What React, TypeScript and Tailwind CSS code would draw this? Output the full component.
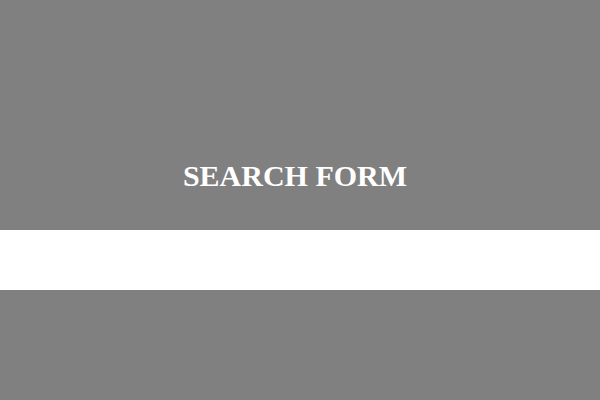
import React from 'react';

const App: React.FC = () => {
  return (
    <div className="w-[600px] h-[400px] bg-[#808080] flex flex-col overflow-hidden">
      <h2
        className="pt-[158px] pr-[10px] text-center text-[30px] leading-[36px] font-bold text-white"
        style={{ fontFamily: '"Liberation Serif", "Times New Roman", serif' }}
      >
        SEARCH FORM
      </h2>
      <div className="mt-[36px] h-[60px] w-full bg-white" />
    </div>
  );
};

export default App;
